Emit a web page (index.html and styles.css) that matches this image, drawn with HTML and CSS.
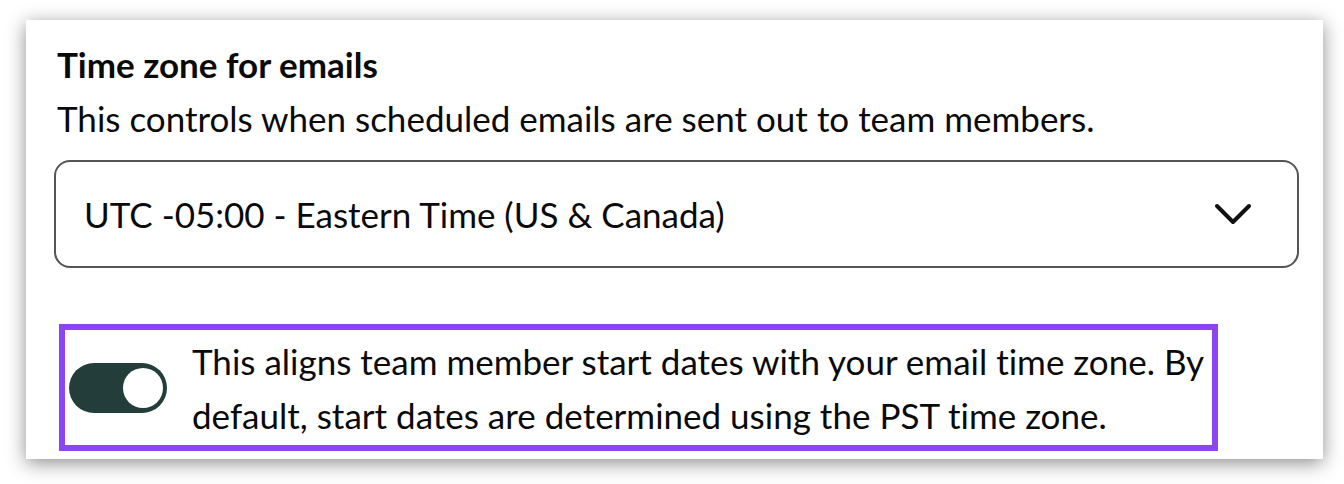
FILE: index.html
```html
<!DOCTYPE html>
<html>
<head>
<meta charset="utf-8">
<link rel="stylesheet" href="styles.css">
</head>
<body>
<div class="card">
  <div class="title">Time zone for emails</div>
  <div class="desc">This controls when scheduled emails are sent out to team members.</div>
  <div class="select">
    <span class="select-text">UTC -05:00 - Eastern Time (US &amp; Canada)</span>
    <svg class="chev" width="40" height="26" viewBox="0 0 40 26"><path d="M4 5 L20 21 L36 5" fill="none" stroke="#111" stroke-width="4" stroke-linecap="round" stroke-linejoin="round"/></svg>
  </div>
  <div class="highlight">
    <div class="toggle"><div class="knob"></div></div>
    <div class="toggle-text">This aligns team member start dates with your email time zone. By default, start dates are determined using the PST time zone.</div>
  </div>
</div>
</body>
</html>
```
FILE: styles.css
```css
html, body {
  margin: 0;
  padding: 0;
  background: #fff;
}
body {
  padding: 20px 21px 25px 26px;
  font-family: Lato, "Noto Sans", sans-serif;
  font-variant-ligatures: no-common-ligatures;
  color: #0a0a0a;
}
.card {
  width: 1297px;
  height: 439px;
  box-sizing: border-box;
  background: #fff;
  box-shadow: 0 4px 18px rgba(0,0,0,0.45);
  padding: 23px 24px 0 31px;
  overflow: hidden;
}
.title {
  font-weight: 700;
  font-size: 35px;
  line-height: 42px;
}
.desc {
  font-size: 35px;
  line-height: 44px;
  margin-top: 11px;
}
.select {
  margin: 20px 0 0 -3px;
  height: 108px;
  box-sizing: border-box;
  border: 2px solid #555;
  border-radius: 16px;
  display: flex;
  align-items: center;
  justify-content: space-between;
  padding: 0 44px 0 28px;
}
.select-text {
  font-size: 35px;
}
.chev { display: block; }
.highlight {
  margin: 56px 0 0 2px;
  width: 1159px;
  box-sizing: border-box;
  border: 6px solid #8c44f6;
  display: flex;
  align-items: center;
  padding: 0 0 0 4px;
  height: 127px;
}
.toggle {
  width: 98px;
  height: 50px;
  border-radius: 25px;
  background: #233d3b;
  position: relative;
  flex: none;
  margin-right: 25px;
}
.knob {
  position: absolute;
  right: 4px;
  top: 5px;
  width: 40px;
  height: 40px;
  border-radius: 50%;
  background: #fff;
}
.toggle-text {
  font-size: 35px;
  line-height: 54px;
}
```
